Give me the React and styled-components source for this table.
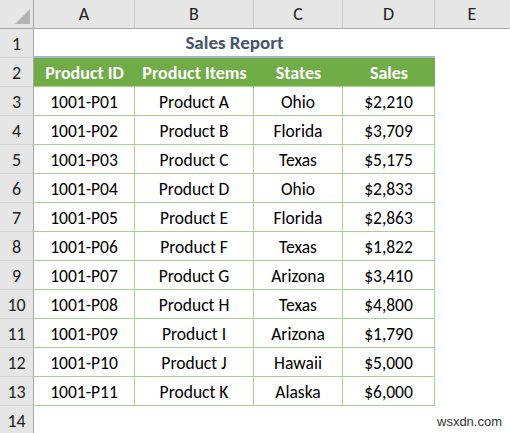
import React from "react";
import styled, { createGlobalStyle } from "styled-components";

const Global = createGlobalStyle`
  html, body { margin: 0; padding: 0; background: #fff; }
  body { width: 510px; height: 433px; overflow: hidden; }
`;

const FONT = `Carlito, Lato, "Noto Sans", sans-serif`;

const Sheet = styled.div`
  position: relative;
  display: grid;
  grid-template-columns: 34px 101px 119px 89px 92px 1fr;
  grid-auto-rows: 29px;
  width: 510px;
  height: 433px;
  font-family: ${FONT};
  font-size: 17.5px;
  color: #000;
`;

const Corner = styled.div`
  background: #e6e6e6;
  border-right: 1px solid #a6a6a6;
  border-bottom: 1px solid #a6a6a6;
  display: flex;
  align-items: flex-end;
  justify-content: flex-end;
  padding: 0 3px 4px 0;
`;

const ColHead = styled.div`
  background: #e6e6e6;
  border-bottom: 1px solid #a6a6a6;
  border-right: 1px solid ${(p) => (p.$last ? "transparent" : "#c8c8c8")};
  display: flex;
  align-items: center;
  justify-content: center;
  font-size: 18px;
  color: #222;
`;

const RowHead = styled.div`
  background: #e6e6e6;
  border-right: 1px solid #a6a6a6;
  border-bottom: 1px solid #d4d4d4;
  display: flex;
  align-items: center;
  justify-content: center;
  padding-top: 2px;
  font-size: 18px;
  color: #222;
`;

const Title = styled.div`
  grid-column: 2 / span 4;
  border-bottom: 2px solid #a3b5d0;
  display: flex;
  align-items: center;
  justify-content: center;
  font-weight: bold;
  font-size: 19px;
  color: #44546a;
`;

const HeadCell = styled.div`
  background: #70ad47;
  color: #fff;
  font-weight: bold;
  font-size: 18px;
  display: flex;
  align-items: center;
  justify-content: center;
  border-bottom: 1px solid #a9d08e;
  padding-top: 1px;
`;

const Cell = styled.div`
  border-right: 1px solid #a9d08e;
  border-bottom: 1px solid #a9d08e;
  display: flex;
  align-items: center;
  justify-content: center;
  padding-top: 2px;
`;

const Blank = styled.div``;

const Watermark = styled.div`
  position: absolute;
  left: 437px;
  top: 414px;
  font-family: "Liberation Sans", Arial, sans-serif;
  font-size: 13px;
  color: #333;
`;

const rows = [
  ["1001-P01", "Product A", "Ohio", "$2,210"],
  ["1001-P02", "Product B", "Florida", "$3,709"],
  ["1001-P03", "Product C", "Texas", "$5,175"],
  ["1001-P04", "Product D", "Ohio", "$2,833"],
  ["1001-P05", "Product E", "Florida", "$2,863"],
  ["1001-P06", "Product F", "Texas", "$1,822"],
  ["1001-P07", "Product G", "Arizona", "$3,410"],
  ["1001-P08", "Product H", "Texas", "$4,800"],
  ["1001-P09", "Product I", "Arizona", "$1,790"],
  ["1001-P10", "Product J", "Hawaii", "$5,000"],
  ["1001-P11", "Product K", "Alaska", "$6,000"],
];

export default function App() {
  return (
    <>
      <Global />
      <Sheet>
        <Corner>
          <svg width="15" height="15" viewBox="0 0 15 15">
            <polygon points="15,0 15,15 0,15" fill="#b4b4b4" />
          </svg>
        </Corner>
        {["A", "B", "C", "D", "E"].map((c, i) => (
          <ColHead key={c} $last={i === 4}>{c}</ColHead>
        ))}

        <RowHead>1</RowHead>
        <Title>Sales Report</Title>
        <Blank />

        <RowHead>2</RowHead>
        {["Product ID", "Product Items", "States", "Sales"].map((h) => (
          <HeadCell key={h}>{h}</HeadCell>
        ))}
        <Blank />

        {rows.map((r, i) => (
          <React.Fragment key={i}>
            <RowHead>{i + 3}</RowHead>
            {r.map((v, j) => (
              <Cell key={j}>{v}</Cell>
            ))}
            <Blank />
          </React.Fragment>
        ))}

        <RowHead>14</RowHead>
        <Blank />
        <Blank />
        <Blank />
        <Blank />
        <Blank />
        <Watermark>wsxdn.com</Watermark>
      </Sheet>
    </>
  );
}
